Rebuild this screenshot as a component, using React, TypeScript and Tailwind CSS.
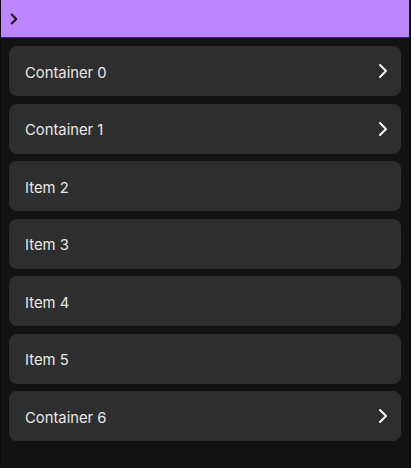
import { ChevronRight } from 'lucide-react';

const rows = [
  { label: 'Container 0', nested: true },
  { label: 'Container 1', nested: true },
  { label: 'Item 2', nested: false },
  { label: 'Item 3', nested: false },
  { label: 'Item 4', nested: false },
  { label: 'Item 5', nested: false },
  { label: 'Container 6', nested: true },
];

export default function App() {
  return (
    <div
      className="h-[468px] w-[411px] overflow-hidden border-l border-r-2 border-[#0b0b0b] bg-[#121212]"
      style={{ fontFamily: 'Inter, "Noto Sans", sans-serif' }}
    >
      {/* app bar */}
      <div className="flex h-[38px] items-center border-b border-[#3b2a52] bg-[#bb86fc] pl-[4px]">
        <ChevronRight size={18} strokeWidth={2.6} className="text-[#111]" />
      </div>

      <div className="flex flex-col gap-[7.5px] px-2 pt-2">
        {rows.map((row) => (
          <div
            key={row.label}
            className="flex h-[50px] items-center justify-between rounded-lg bg-[#2e2e2e] pl-4 pr-[6px]"
          >
            <span className="pt-[4px] text-[14.8px] font-normal text-[#e8e8e8]">{row.label}</span>
            {row.nested && <ChevronRight size={24} strokeWidth={1.9} className="text-white" />}
          </div>
        ))}
      </div>
    </div>
  );
}
